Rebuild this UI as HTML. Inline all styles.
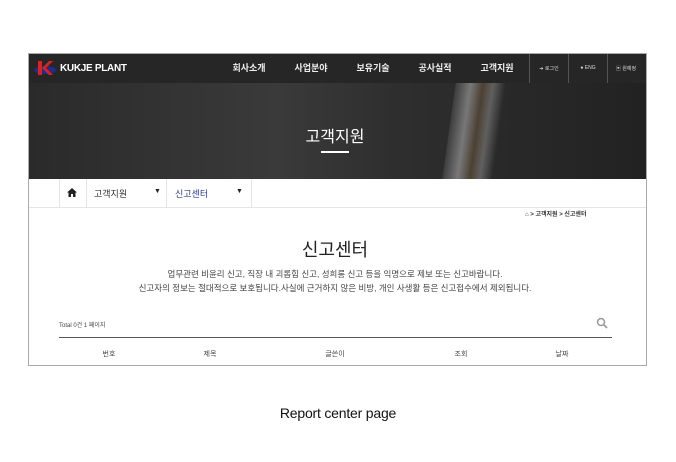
<!DOCTYPE html><html><head><meta charset="utf-8"><style>
body{margin:0;width:676px;height:462px;background:#fff;font-family:"Liberation Sans","Noto Sans CJK KR",sans-serif;position:relative;overflow:hidden}
.a{position:absolute;white-space:nowrap}
.frame{position:absolute;left:28px;top:53px;width:619px;height:313px;border:1px solid #aaa;box-sizing:border-box;overflow:hidden}
.nav{position:absolute;left:0;top:0;width:100%;height:29px;background:#262626;border-bottom:1px solid #555}
.hero{position:absolute;left:0;top:29px;width:100%;height:96px;background:linear-gradient(90deg,#2a2a2a,#3a3a3a 40%,#2e2e2e 60%,#222)}
.c{transform:translateX(-50%)}
.m{color:#eee;font-size:9px;top:7px;font-weight:bold}
</style></head><body>
<div class="frame">
<div class="nav">
<svg class="a" style="left:4px;top:5px" width="24" height="18"><ellipse cx="12" cy="11" rx="11" ry="4" fill="#1a2f8a"/><path d="M5 2h4v14H5zM9 9l7-7h4l-7 7 7 7h-4z" fill="#e02020"/></svg>
<div class="a" style="left:31px;top:9px;color:#fff;font-size:10px;font-weight:bold;letter-spacing:-0.3px">KUKJE PLANT</div>
<div class="a m c" style="left:220px">회사소개</div>
<div class="a m c" style="left:282px">사업분야</div>
<div class="a m c" style="left:344px">보유기술</div>
<div class="a m c" style="left:406px">공사실적</div>
<div class="a m c" style="left:468px">고객지원</div>
<div class="a" style="left:500px;top:0;width:1px;height:29px;background:#555"></div>
<div class="a" style="left:539px;top:0;width:1px;height:29px;background:#555"></div>
<div class="a" style="left:578px;top:0;width:1px;height:29px;background:#555"></div>
<div class="a c" style="left:520px;top:11px;color:#ddd;font-size:5px">➜ 로그인</div>
<div class="a c" style="left:559px;top:11px;color:#ddd;font-size:5px">● ENG</div>
<div class="a c" style="left:597px;top:11px;color:#ddd;font-size:5px">▣ 원예정</div>
</div>
<div class="hero">
<div class="a" style="left:420px;top:0;width:50px;height:96px;background:linear-gradient(90deg,#444,#999 30%,#5a4a35 55%,#777 75%,#2a2a2a);opacity:.7;transform:skewX(-8deg)"></div>
<div class="a c" style="left:306px;top:40px;color:#fff;font-size:16px">고객지원</div>
<div class="a" style="left:292px;top:68px;width:28px;height:2px;background:#fff"></div>
</div>
<div class="a" style="left:0;top:125px;width:100%;height:28px;border-bottom:1px solid #e5e5e5"></div>
<div class="a" style="left:30px;top:125px;width:1px;height:28px;background:#e5e5e5"></div>
<div class="a" style="left:57px;top:125px;width:1px;height:28px;background:#e5e5e5"></div>
<div class="a" style="left:137px;top:125px;width:1px;height:28px;background:#e5e5e5"></div>
<div class="a" style="left:222px;top:125px;width:1px;height:28px;background:#e5e5e5"></div>
<svg class="a" style="left:38px;top:134px" width="10" height="9"><path d="M5 0L0 4.5h1.5V9h2.5V6h2v3h2.5V4.5H10z" fill="#222"/></svg>
<div class="a" style="left:65px;top:133px;font-size:9px;color:#333">고객지원</div>
<div class="a" style="left:125px;top:134px;font-size:7px;color:#222">▼</div>
<div class="a" style="left:146px;top:133px;font-size:9px;color:#2a3a8a">신고센터</div>
<div class="a" style="left:207px;top:134px;font-size:7px;color:#222">▼</div>
<div class="a" style="left:496px;top:155px;font-size:6px;color:#333;font-weight:bold">⌂ &gt; 고객지원 &gt; 신고센터</div>
<div class="a c" style="left:306px;top:182px;font-size:18px;color:#222">신고센터</div>
<div class="a c" style="left:306px;top:214px;font-size:8.5px;color:#444">업무관련 비윤리 신고, 직장 내 괴롭힘 신고, 성희롱 신고 등을 익명으로 제보 또는 신고바랍니다.</div>
<div class="a c" style="left:306px;top:228px;font-size:8.5px;color:#444">신고자의 정보는 절대적으로 보호됩니다.사실에 근거하지 않은 비방, 개인 사생활 등은 신고접수에서 제외됩니다.</div>
<div class="a" style="left:30px;top:266px;font-size:6px;color:#444">Total 0건 1 페이지</div>
<svg class="a" style="left:567px;top:263px" width="12" height="12"><circle cx="5" cy="5" r="3.5" fill="none" stroke="#999" stroke-width="1.5"/><path d="M7.5 7.5l3.5 3.5" stroke="#999" stroke-width="1.6"/></svg>
<div class="a" style="left:30px;top:283px;width:553px;height:1px;background:#555"></div>
<div class="a c" style="left:80px;top:295px;font-size:7px;color:#444">번호</div>
<div class="a c" style="left:181px;top:295px;font-size:7px;color:#444">제목</div>
<div class="a c" style="left:306px;top:295px;font-size:7px;color:#444">글쓴이</div>
<div class="a c" style="left:432px;top:295px;font-size:7px;color:#444">조회</div>
<div class="a c" style="left:533px;top:295px;font-size:7px;color:#444">날짜</div>
</div>
<div class="a c" style="left:338px;top:405px;font-size:14px;color:#111;letter-spacing:-0.2px">Report center page</div>
</body></html>
